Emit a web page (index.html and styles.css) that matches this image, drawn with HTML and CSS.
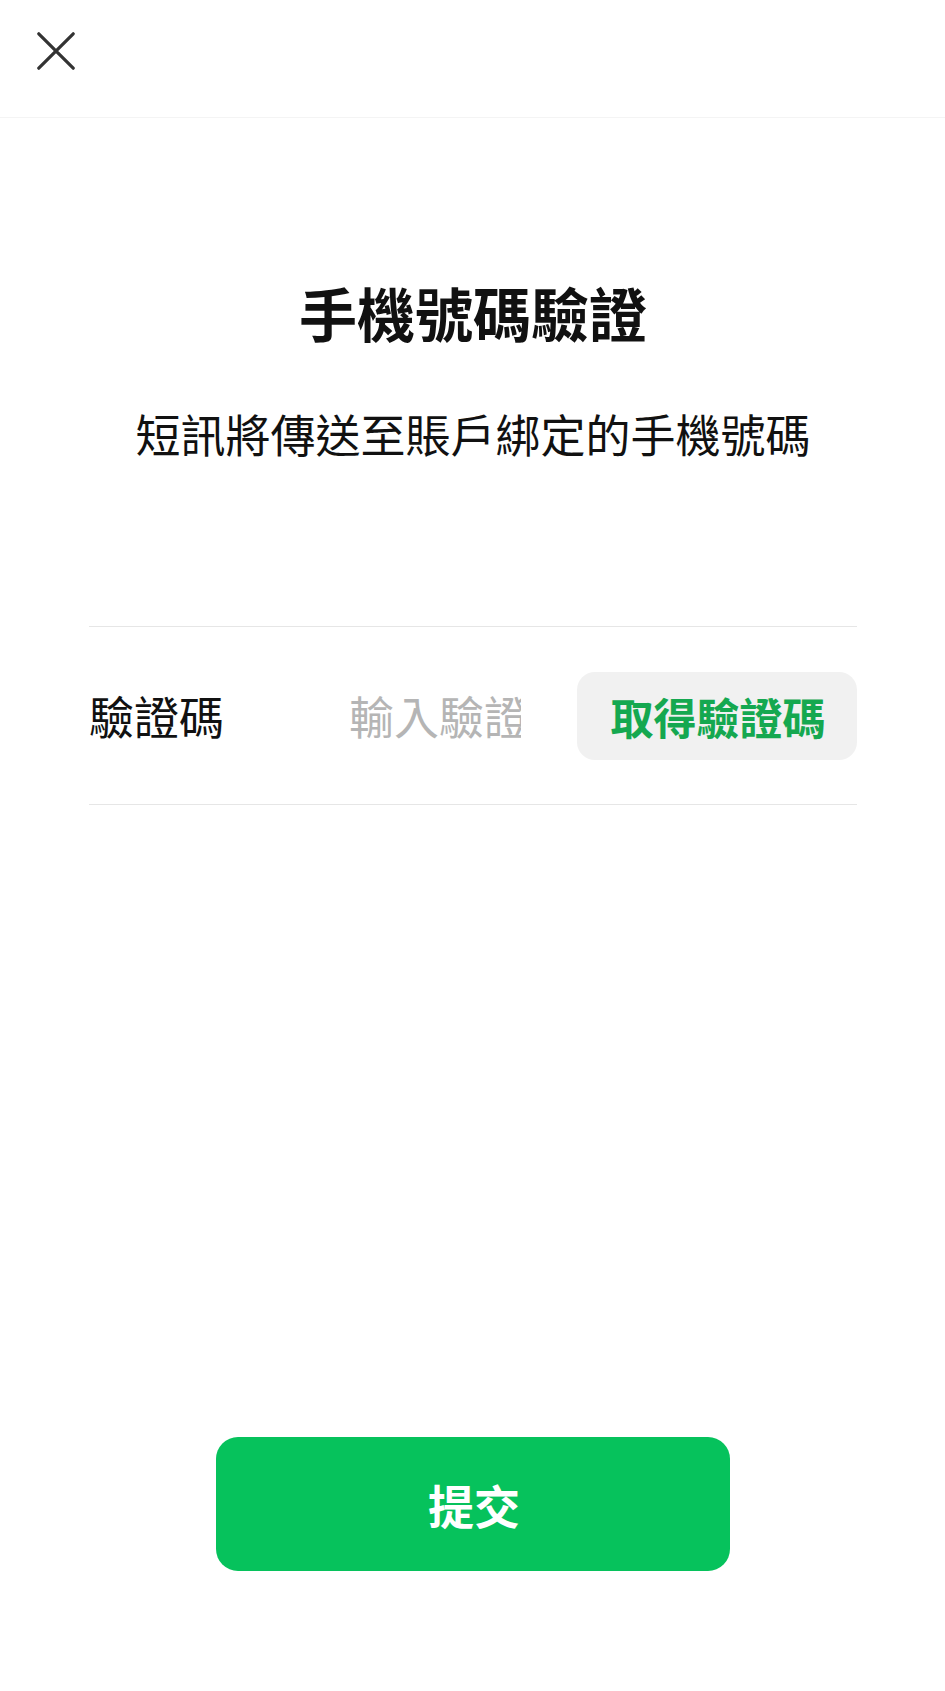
FILE: index.html
```html
<!DOCTYPE html>
<html lang="zh-Hant">
<head>
<meta charset="utf-8">
<title>手機號碼驗證</title>
<link rel="stylesheet" href="styles.css">
</head>
<body>
<div class="page">
  <header class="header">
    <button class="close" aria-label="關閉">
      <svg width="38" height="38" viewBox="0 0 38 38"><path d="M1.8 1.8 L36.2 36.2 M36.2 1.8 L1.8 36.2" stroke="#333" stroke-width="3.2" stroke-linecap="round" fill="none"/></svg>
    </button>
  </header>
  <main class="main">
    <h1 class="title">手機號碼驗證</h1>
    <p class="subtitle">短訊將傳送至賬戶綁定的手機號碼</p>
    <div class="field">
      <span class="label">驗證碼</span>
      <input class="code-input" type="text" placeholder="輸入驗證碼">
      <button class="get-code">取得驗證碼</button>
    </div>
    <div class="submit-wrap">
      <button class="submit">提交</button>
    </div>
  </main>
</div>
</body>
</html>
```

FILE: styles.css
```css
* { box-sizing: border-box; }
html, body { margin: 0; padding: 0; background: #fff; }
body {
  font-family: "Noto Sans CJK TC", "Noto Sans CJK SC", "Noto Sans", sans-serif;
  color: #111;
}
.page { width: 945px; height: 1691px; display: flex; flex-direction: column; }
.header {
  height: 118px;
  border-bottom: 1px solid #f4f4f4;
  padding: 32px 0 0 37px;
}
.close {
  width: 38px; height: 38px; padding: 0; margin: 0;
  border: none; background: none; display: block;
}
.close svg { display: block; }
.main {
  flex: 1;
  padding: 0 88px 0 89px;
  display: flex;
  flex-direction: column;
}
.title {
  margin: 159px 0 0;
  font-size: 58px;
  line-height: 70px;
  font-weight: 700;
  text-align: center;
  color: #111;
}
.subtitle {
  margin: 57px 0 0;
  font-size: 45px;
  line-height: 60px;
  font-weight: 400;
  text-align: center;
  color: #111;
}
.field {
  margin-top: 162px;
  height: 179px;
  border-top: 1px solid #e6e6e6;
  border-bottom: 1px solid #e6e6e6;
  display: flex;
  align-items: center;
}
.label {
  width: 260px;
  font-size: 45px;
  line-height: 60px;
  color: #111;
  flex: none;
}
.code-input {
  width: 172px;
  flex: none;
  border: none;
  outline: none;
  padding: 0;
  font-family: inherit;
  font-size: 45px;
  line-height: 60px;
  height: 60px;
  color: #111;
  background: transparent;
}
.code-input::placeholder { color: #b5b5b5; }
.get-code {
  margin-left: auto;
  width: 280px;
  height: 88px;
  border: none;
  border-radius: 18px;
  background: #f1f1f1;
  color: #15a850;
  font-family: inherit;
  font-size: 43px;
  font-weight: 700;
  padding: 0 0 0 2px;
}
.submit-wrap {
  margin-top: 632px;
  display: flex;
  justify-content: center;
}
.submit {
  width: 514px;
  height: 134px;
  border: none;
  border-radius: 22px;
  background: #06c25c;
  color: #fff;
  font-family: inherit;
  font-size: 46px;
  font-weight: 700;
  padding: 0 0 0 2px;
}
```
